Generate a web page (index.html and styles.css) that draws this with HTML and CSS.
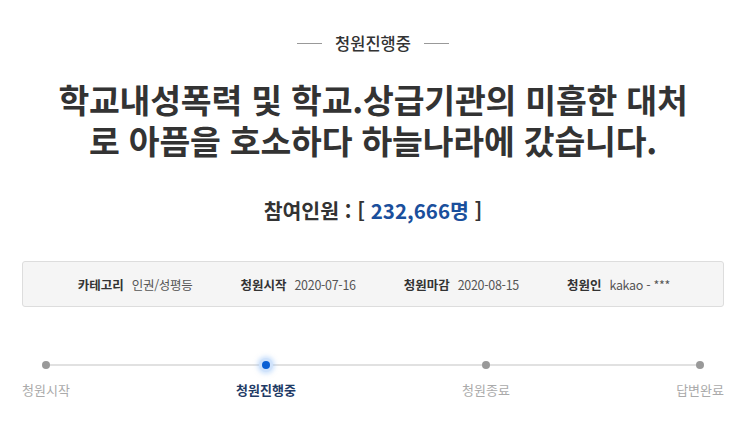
FILE: index.html
```html
<!DOCTYPE html>
<html lang="ko">
<head>
<meta charset="utf-8">
<link rel="stylesheet" href="styles.css">
</head>
<body>
<div class="page">
  <div class="status"><span class="rule"></span><span class="status-text">청원진행중</span><span class="rule"></span></div>
  <h1 class="title">학교내성폭력 및 학교.상급기관의 미흡한 대처<br>로 아픔을 호소하다 하늘나라에 갔습니다.</h1>
  <div class="count">참여인원 : [ <span class="num">232,666명</span> ]</div>
  <div class="info">
    <div class="item"><span class="label">카테고리</span><span class="value">인권/성평등</span></div>
    <div class="item"><span class="label">청원시작</span><span class="value">2020-07-16</span></div>
    <div class="item"><span class="label">청원마감</span><span class="value">2020-08-15</span></div>
    <div class="item"><span class="label">청원인</span><span class="value">kakao - ***</span></div>
  </div>
  <div class="steps">
    <div class="step"><span class="dot"></span><span class="step-label">청원시작</span></div>
    <div class="step active"><span class="dot"></span><span class="step-label">청원진행중</span></div>
    <div class="step"><span class="dot"></span><span class="step-label">청원종료</span></div>
    <div class="step"><span class="dot"></span><span class="step-label">답변완료</span></div>
  </div>
</div>
</body>
</html>
```
FILE: styles.css
```css
html, body {
  margin: 0;
  padding: 0;
  background: #fff;
}
body {
  font-family: "Noto Sans CJK KR", "Noto Sans", sans-serif;
  color: #333;
  width: 745px;
  height: 422px;
  overflow: hidden;
}
.page {
  padding: 30px 21px 0 22px;
}
.status {
  display: flex;
  justify-content: center;
  align-items: center;
  gap: 13px;
  height: 26px;
}
.rule {
  width: 25px;
  height: 1px;
  background: #999;
}
.status-text {
  font-size: 16.5px;
  font-weight: 500;
  color: #333;
}
.title {
  margin: 22px 0 0;
  text-align: center;
  font-size: 33.5px;
  font-weight: 700;
  line-height: 41px;
  color: #333;
  letter-spacing: -0.2px;
}
.count {
  margin-top: 37px;
  text-align: center;
  font-size: 20.5px;
  font-weight: 700;
  line-height: 26px;
  color: #333;
}
.count .num {
  color: #1a4f9c;
}
.info {
  margin-top: 38px;
  height: 44px;
  border: 1px solid #ddd;
  border-radius: 3px;
  background: #f5f5f5;
  display: flex;
  justify-content: center;
  align-items: center;
  gap: 48px;
  font-size: 12.5px;
  padding-left: 2px;
}
.item {
  display: flex;
  align-items: center;
  gap: 8px;
}
.label {
  font-weight: 700;
  color: #333;
}
.value {
  color: #555;
  letter-spacing: -0.3px;
}
.steps {
  margin-top: 53px;
  display: flex;
  justify-content: space-between;
  position: relative;
}
.steps::before {
  content: "";
  position: absolute;
  left: 24px;
  right: 24px;
  top: 4px;
  height: 2px;
  background: #e1e1e1;
}
.step {
  display: flex;
  flex-direction: column;
  align-items: center;
  gap: 12px;
  position: relative;
}
.dot {
  width: 8px;
  height: 8px;
  border-radius: 50%;
  background: #999;
  margin-top: 1px;
}
.step.active .dot {
  background: #0b5fd4;
  box-shadow: 0 0 0 3px #cfe2fb, 0 0 4px 5px rgba(160,200,250,0.5);
}
.step-label {
  font-size: 13px;
  color: #aaa;
  line-height: 18px;
}
.step.active .step-label {
  color: #1f3b66;
  font-weight: 700;
}
```
